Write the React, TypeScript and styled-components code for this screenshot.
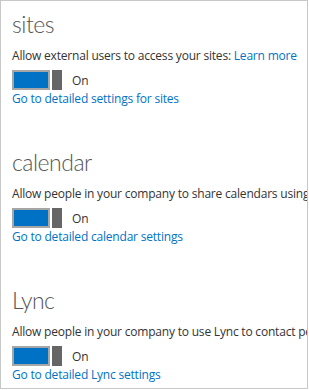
import React from "react";
import styled, { createGlobalStyle } from "styled-components";

const GlobalStyle = createGlobalStyle`
  html, body {
    margin: 0;
    padding: 0;
    background: #ffffff;
  }
  body {
    font-family: "Open Sans", "Liberation Sans", sans-serif;
  }
`;

type Setting = {
  title: string;
  description: string;
  learnMore?: boolean;
  link: string;
};

const settings: Setting[] = [
  {
    title: "sites",
    description: "Allow external users to access your sites:",
    learnMore: true,
    link: "Go to detailed settings for sites",
  },
  {
    title: "calendar",
    description:
      "Allow people in your company to share calendars using external services",
    link: "Go to detailed calendar settings",
  },
  {
    title: "Lync",
    description:
      "Allow people in your company to use Lync to contact people outside your company",
    link: "Go to detailed Lync settings",
  },
];

const App: React.FC = () => {
  return (
    <>
      <GlobalStyle />
      <Frame>
        {settings.map((s) => (
          <Section key={s.title}>
            <Heading>{s.title}</Heading>
            <Description>
              {s.description}
              {s.learnMore && (
                <>
                  {" "}
                  <Link href="#">Learn more</Link>
                </>
              )}
            </Description>
            <ToggleRow>
              <Track />
              <Thumb />
              <ToggleLabel>On</ToggleLabel>
            </ToggleRow>
            <DetailLink href="#">{s.link}</DetailLink>
          </Section>
        ))}
      </Frame>
    </>
  );
};

//Styled-Components
const Frame = styled.div`
  box-sizing: border-box;
  width: 308px;
  height: 389px;
  border: 1px solid #c8c8c8;
  overflow: hidden;
  padding-left: 11px;
`;

const Section = styled.section`
  height: 138px;
  padding-top: 8px;
  box-sizing: border-box;
  display: flex;
  flex-direction: column;
  align-items: flex-start;
`;

const Heading = styled.h2`
  margin: 0;
  font-family: "Lato", "Open Sans", sans-serif;
  font-size: 23px;
  line-height: 30px;
  font-weight: 300;
  letter-spacing: -0.5px;
  color: #555555;
`;

const Description = styled.p`
  margin: 9px 0 0;
  font-size: 12px;
  line-height: 16px;
  letter-spacing: -0.2px;
  color: #333333;
  white-space: nowrap;
`;

const Link = styled.a`
  color: #0072c6;
  text-decoration: none;
`;

const ToggleRow = styled.div`
  margin-top: 6px;
  display: flex;
  align-items: center;
  height: 20px;
`;

const Track = styled.span`
  box-sizing: border-box;
  width: 38px;
  height: 20px;
  border: 2px solid #a6a6a6;
  background: #0072c6;
`;

const Thumb = styled.span`
  width: 10px;
  height: 20px;
  margin-left: 2px;
  background: #666666;
`;

const ToggleLabel = styled.span`
  margin-left: 10px;
  font-size: 12px;
  color: #333333;
`;

const DetailLink = styled(Link)`
  margin-top: 1px;
  font-size: 12px;
  line-height: 16px;
  letter-spacing: -0.2px;
`;

export default App;
